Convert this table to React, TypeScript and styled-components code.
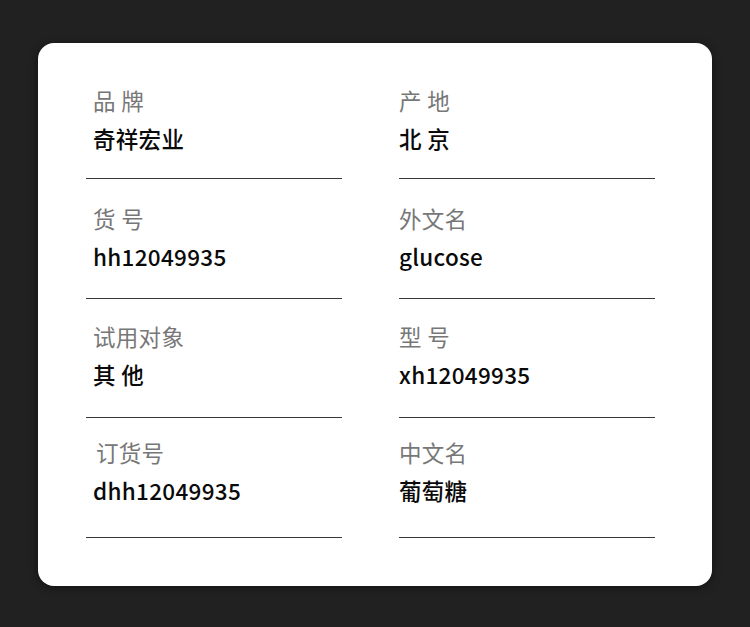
import styled, { createGlobalStyle } from 'styled-components'

const GlobalStyle = createGlobalStyle`
	html, body {
		margin: 0;
		padding: 0;
		background: #212121;
	}
	body {
		font-family: "Noto Sans CJK SC", "Noto Sans", sans-serif;
	}
`

const rowLift = [0, -2, -3, -7]

const fields = [
	{ label: '品 牌', value: '奇祥宏业' },
	{ label: '产 地', value: '北 京' },
	{ label: '货 号', value: 'hh12049935' },
	{ label: '外文名', value: 'glucose' },
	{ label: '试用对象', value: '其 他' },
	{ label: '型 号', value: 'xh12049935' },
	{ label: '订货号', value: 'dhh12049935', indent: 3 },
	{ label: '中文名', value: '葡萄糖' },
]

export default function App() {
	return (
		<>
			<GlobalStyle />
			<Page>
				<Card>
					<Grid>
						{fields.map((f, i) => (
							<Field key={i} $left={i % 2 === 0}>
								<Label $indent={f.indent ?? 0} $lift={rowLift[Math.floor(i / 2)]}>
									{f.label}
								</Label>
								<Value>{f.value}</Value>
							</Field>
						))}
					</Grid>
				</Card>
			</Page>
		</>
	)
}

const Page = styled.div`
	width: 750px;
	height: 627px;
	padding: 43px 38px 0 38px;
	box-sizing: border-box;
`

const Card = styled.div`
	width: 674px;
	height: 543px;
	background: #ffffff;
	border-radius: 16px;
	box-shadow: 0 2px 10px rgba(0, 0, 0, 0.45);
	box-sizing: border-box;
	padding: 39px 57px 0 48px;
`

const Grid = styled.div`
	display: grid;
	grid-template-columns: 256px 256px;
	column-gap: 57px;
	row-gap: 22.7px;
`

const Field = styled.div<{ $left: boolean }>`
	height: 97px;
	box-sizing: border-box;
	border-bottom: 1px solid #383838;
	padding-left: ${(p) => (p.$left ? '7px' : '0')};
	display: flex;
	flex-direction: column;
`

const Label = styled.div<{ $indent: number; $lift: number }>`
	font-size: 22.5px;
	letter-spacing: 0.3px;
	line-height: 32px;
	color: #777777;
	font-weight: 400;
	margin-left: ${(p) => p.$indent}px;
	margin-top: ${(p) => 2 + p.$lift}px;
`

const Value = styled.div`
	font-size: 22.5px;
	letter-spacing: 0.3px;
	line-height: 32px;
	color: #0a0a0a;
	font-weight: 500;
	margin-top: 6px;
`
